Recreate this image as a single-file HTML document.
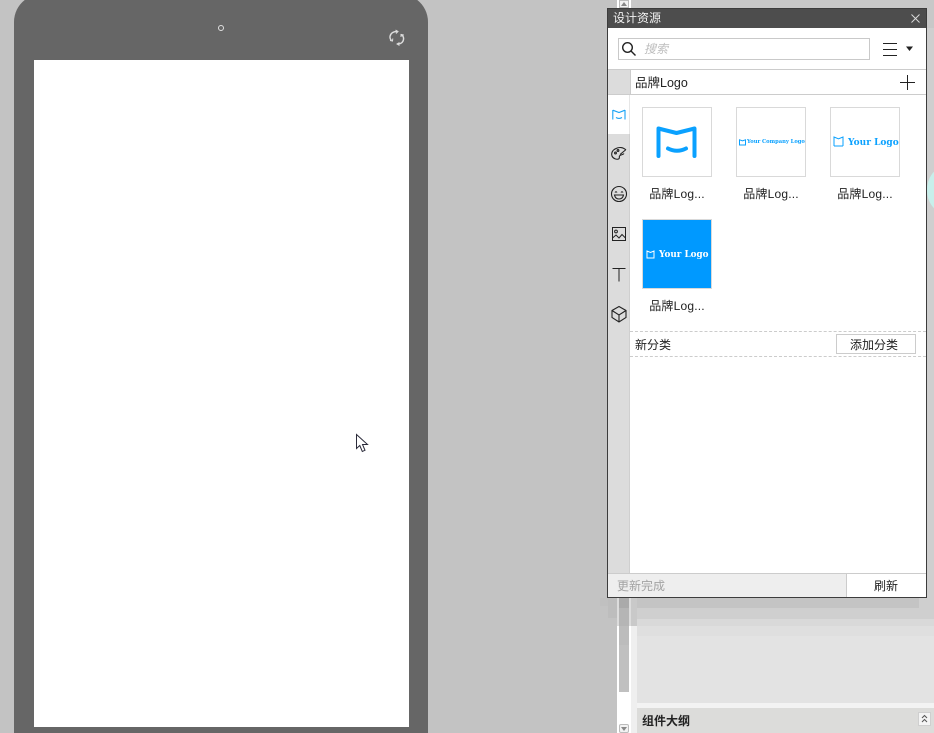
<!DOCTYPE html>
<html lang="zh">
<head>
<meta charset="utf-8">
<style>
html,body{margin:0;padding:0;width:934px;height:733px;overflow:hidden;background:#c3c3c3;}
body{position:relative;font-family:"Liberation Sans","Noto Sans CJK SC",sans-serif;font-size:12px;color:#222;}
.a{position:absolute;}
svg{position:absolute;overflow:hidden;}
.t{position:absolute;white-space:nowrap;line-height:16px;}
.thumb{position:absolute;width:68px;height:68px;border:1px solid #d9d9d9;background:#fff;overflow:hidden;}
.cap{position:absolute;width:70px;text-align:center;white-space:nowrap;line-height:16px;font-size:12px;letter-spacing:.2px;color:#222;}
.logo{position:absolute;font-family:"DejaVu Serif","Liberation Serif",serif;font-weight:bold;white-space:nowrap;}
</style>
</head>
<body>
<!-- right workspace -->
<div class="a" style="left:617px;top:0;width:14px;height:733px;background:#fff;"></div>
<div class="a" style="left:631px;top:0;width:6px;height:733px;background:#efefef;"></div>
<div class="a" style="left:637px;top:0;width:297px;height:703px;background:#e3e3e3;"></div>
<div class="a" style="left:637px;top:703px;width:297px;height:5px;background:#f3f3f3;"></div>
<div class="a" style="left:637px;top:708px;width:297px;height:25px;background:#dcdcda;"></div>
<div class="t" style="left:642px;top:713px;font-weight:bold;font-size:12px;color:#222;">组件大纲</div>
<div class="a" style="left:918px;top:712px;width:13px;height:14px;background:#f4f4f4;border:1px solid #cfcfcf;box-sizing:border-box;"></div>
<svg style="left:918px;top:712px;" width="13" height="14" fill="none" stroke="#555" stroke-width="1"><path d="M4 6l2.500-2.500L9 6M4 10l2.500-2.500L9 10"/></svg>
<div class="a" style="left:619px;top:724px;width:10px;height:9px;background:#f2f2f2;border:1px solid #bbb;box-sizing:border-box;border-radius:2px;"></div>
<svg style="left:619px;top:724px;" width="10" height="9"><path d="M2 3h6L5 7z" fill="#888"/></svg>

<!-- stepped drop shadow -->
<div class="a" style="left:637px;top:0;width:297px;height:636px;background:#dfdfdf;"></div>
<div class="a" style="left:637px;top:0;width:297px;height:626px;background:#d9d9d9;"></div>
<div class="a" style="left:637px;top:0;width:297px;height:619px;background:#cfcfcf;"></div>
<div class="a" style="left:637px;top:0;width:282px;height:608px;background:#c4c4c4;"></div>
<div class="a" style="left:637px;top:0;width:297px;height:28px;background:#c8c8c8;"></div>
<div class="a" style="left:631px;top:0;width:6px;height:626px;background:#c9c9c9;"></div>
<div class="a" style="left:617px;top:598px;width:2px;height:28px;background:#dcdcdc;"></div>
<div class="a" style="left:629px;top:598px;width:2px;height:28px;background:#dcdcdc;"></div>
<!-- scrollbar -->
<div class="a" style="left:619px;top:598px;width:10px;height:94px;background:#c0c0c0;"></div>
<div class="a" style="left:619px;top:598px;width:10px;height:47px;background:#bcbcbc;"></div>
<div class="a" style="left:619px;top:598px;width:10px;height:28px;background:#b5b5b5;"></div>
<div class="a" style="left:619px;top:598px;width:10px;height:10px;background:#aaaaaa;"></div>
<div class="a" style="left:619px;top:0;width:10px;height:8px;background:#f2f2f2;border:1px solid #bbb;box-sizing:border-box;"></div>
<svg style="left:619px;top:0;" width="10" height="8"><path d="M2 6h6L5 2z" fill="#888"/></svg>
<!-- left shadow steps -->
<div class="a" style="left:608px;top:598px;width:9px;height:20px;background:#bdbdbd;"></div>
<div class="a" style="left:600px;top:598px;width:8px;height:8px;background:#c0c0c0;"></div>
<svg style="left:927px;top:168px;" width="7" height="44"><ellipse cx="16" cy="22" rx="16" ry="22" fill="#c8efeb"/></svg>

<!-- device mock -->
<svg style="left:14px;top:0;" width="414" height="733"><path d="M10.700 0H403.300A28 28 0 0 1 414 22V733H0V22A28 28 0 0 1 10.700 0Z" fill="#666"/></svg>
<div class="a" style="left:34px;top:60px;width:375px;height:667px;background:#fff;"></div>
<div class="a" style="left:218px;top:25px;width:4px;height:4px;border:1px solid #e0e0e0;border-radius:50%;"></div>
<svg style="left:388px;top:29px;" width="18" height="18" fill="none" stroke="#ddd" stroke-width="1.400">
<path d="M9 2.500C5 2.500 2.500 4.500 2 7.500C1.800 9 2.500 10.500 3.500 11.500"/>
<path d="M7.500 1l2.500 1.500-2 2M2 11.500l2.500.5.300-2.500" stroke-width="1"/>
<path d="M13 5.500C15 6.500 15.800 8.500 15.500 10.500C15 13.500 12.500 15 9.500 15"/>
<path d="M11.500 13.500l-2.500 1.500 2.500 1.500M15.800 6l-2.800-.5 0 2.500" stroke-width="1"/>
</svg>

<!-- cursor -->
<svg style="left:355px;top:433px;" width="15" height="21"><path d="M1.500 1.500V15.500L4.800 12.500L7.300 18.500L10 17.300L7.500 11.500H12.500Z" fill="#fff" stroke="#2b2b3a" stroke-width="1"/></svg>

<!-- panel -->
<div class="a" style="left:607px;top:8px;width:320px;height:590px;background:#fff;border:1px solid #3c3c3c;box-sizing:border-box;"></div>
<div class="a" style="left:608px;top:9px;width:318px;height:19px;background:#4d4d4d;"></div>
<div class="t" style="left:613px;top:10px;color:#f2f2f2;font-size:12px;">设计资源</div>
<svg style="left:911px;top:14px;" width="9" height="9" stroke="#ddd" stroke-width=".9"><path d="M.5.500l8 8M8.500.500l-8 8"/></svg>

<!-- search -->
<div class="a" style="left:618px;top:38px;width:252px;height:22px;border:1px solid #c9c9c9;box-sizing:border-box;"></div>
<svg style="left:621px;top:41px;" width="16" height="16" fill="none" stroke="#222" stroke-width="1.400"><circle cx="6.500" cy="6.500" r="4.800"/><path d="M10 10l4.500 4.500"/></svg>
<div class="t" style="left:644px;top:41px;color:#bdbdbd;font-size:12px;font-style:italic;">搜索</div>
<div class="a" style="left:883px;top:43px;width:14px;height:1px;background:#222;"></div>
<div class="a" style="left:883px;top:49px;width:14px;height:1px;background:#222;"></div>
<div class="a" style="left:883px;top:55px;width:14px;height:1px;background:#222;"></div>
<svg style="left:906px;top:46px;" width="8" height="6"><path d="M0 .500h7L3.500 5z" fill="#222"/></svg>

<!-- category header -->
<div class="a" style="left:608px;top:69px;width:318px;height:1px;background:#ccc;"></div>
<div class="a" style="left:608px;top:94px;width:318px;height:1px;background:#ccc;"></div>
<div class="a" style="left:608px;top:70px;width:22px;height:24px;background:#dcdcdc;"></div>
<div class="a" style="left:630px;top:70px;width:1px;height:24px;background:#ccc;"></div>
<div class="t" style="left:635px;top:75px;font-size:12.500px;color:#222;">品牌Logo</div>
<svg style="left:900px;top:74px;" width="16" height="16" stroke="#222" stroke-width="1"><path d="M0 8.500h15M7.500 1v15"/></svg>

<!-- sidebar -->
<div class="a" style="left:608px;top:95px;width:21px;height:39px;background:#fff;"></div>
<div class="a" style="left:608px;top:134px;width:21px;height:439px;background:#dcdcdc;"></div>
<div class="a" style="left:629px;top:134px;width:1px;height:439px;background:#cfcfcf;"></div>
<div class="a" style="left:629px;top:95px;width:1px;height:39px;background:#e6e6e6;"></div>
<svg style="left:612px;top:109px;" width="14" height="12" fill="none" stroke="#18a3f5" stroke-width="1.100"><path d="M.800 1v9.500M13 1v9.500M.800 1.200L7 3.500l6-2.300M4 8.500q3 1.800 6 0"/></svg>
<svg style="left:611px;top:146px;" width="16" height="16" fill="none" stroke="#222" stroke-width="1.100"><path d="M15 4C12 1 8 1 5 2.500 1.500 4 0 7 1 10c1 2.500 4.500 3.800 6.500 3 1.500-.5.500-2 1-3C9.500 8.500 12 9 13 7.500"/><circle cx="4.500" cy="7" r=".9"/><circle cx="7" cy="4.500" r=".9"/><path d="M9 8.500l5.500-4.500"/></svg>
<svg style="left:610px;top:185px;" width="18" height="18" fill="none" stroke="#222" stroke-width="1.100"><circle cx="9" cy="9" r="7.500"/><path d="M5 7.500q1-1.500 2 0M11 7.500q1-1.500 2 0"/><path d="M4.500 10h9q-.8 4-4.500 4t-4.500-4z"/></svg>
<svg style="left:612px;top:227px;" width="14" height="14" fill="none" stroke="#222" stroke-width="1"><rect x=".5" y=".5" width="13" height="13"/><circle cx="4" cy="4.500" r="1.400"/><path d="M.5 11l3.500-3 3 3 3-3.500 3.500 3.500"/></svg>
<svg style="left:612px;top:268px;" width="14" height="14" stroke="#222" stroke-width="1"><path d="M.500.500h13M7 .500v13"/></svg>
<svg style="left:610px;top:305px;" width="18" height="18" fill="none" stroke="#222" stroke-width="1.100"><path d="M9 1.500l7 4v7l-7 4.500-7-4.500v-7zM2 5.500l7 4.500 7-4.500M9 10v7"/></svg>

<!-- thumbs -->
<div class="thumb" style="left:642px;top:107px;">
<svg style="left:0;top:0;" width="68" height="68" fill="none" stroke="#0aa1ff" stroke-width="4" stroke-linecap="round" stroke-linejoin="round"><path d="M15.500 48V20.500L33.500 25 51.500 20.500V48"/><path d="M25 40.500q9 4.500 18 0"/></svg>
</div>
<div class="cap" style="left:642px;top:186px;">品牌Log...</div>

<div class="thumb" style="left:736px;top:107px;">
<svg style="left:2px;top:31px;" width="8" height="7" fill="none" stroke="#0aa1ff" stroke-width="1"><path d="M.5 6V.8l3 1 3-1V6z"/></svg>
<div class="logo" style="left:10px;top:28px;font-size:5.200px;color:#0aa1ff;line-height:12px;">Your Company Logo</div>
</div>
<div class="cap" style="left:736px;top:186px;">品牌Log...</div>

<div class="thumb" style="left:830px;top:107px;">
<svg style="left:2px;top:28px;" width="12" height="11" fill="none" stroke="#0aa1ff" stroke-width="1"><path d="M1 10V1l4.500 1.800L10 1v9M1 10h9"/></svg>
<div class="logo" style="left:17px;top:28px;font-size:9px;color:#0aa1ff;line-height:14px;">Your Logo</div>
</div>
<div class="cap" style="left:830px;top:186px;">品牌Log...</div>

<div class="thumb" style="left:642px;top:219px;background:#0099ff;">
<svg style="left:3px;top:30px;" width="10" height="9" fill="none" stroke="#fff" stroke-width="1"><path d="M1 8V1l3.500 1.500L8 1v7z"/></svg>
<div class="logo" style="left:16px;top:28px;font-size:8.800px;color:#fff;line-height:14px;">Your Logo</div>
</div>
<div class="cap" style="left:642px;top:298px;">品牌Log...</div>

<!-- new category -->
<div class="a" style="left:630px;top:331px;width:296px;border-top:1px dashed #ccc;"></div>
<div class="a" style="left:630px;top:356px;width:296px;border-top:1px dashed #ccc;"></div>
<div class="t" style="left:635px;top:337px;">新分类</div>
<div class="a" style="left:836px;top:334px;width:80px;height:20px;border:1px solid #ccc;box-sizing:border-box;"></div>
<div class="t" style="left:850px;top:337px;">添加分类</div>

<!-- footer -->
<div class="a" style="left:608px;top:573px;width:318px;height:24px;background:#eeeeee;border-top:1px solid #ccc;box-sizing:border-box;"></div>
<div class="a" style="left:846px;top:574px;width:80px;height:23px;background:#fff;border-left:1px solid #ccc;box-sizing:border-box;"></div>
<div class="t" style="left:617px;top:578px;color:#a3a3a3;">更新完成</div>
<div class="t" style="left:874px;top:578px;">刷新</div>
</body>
</html>
